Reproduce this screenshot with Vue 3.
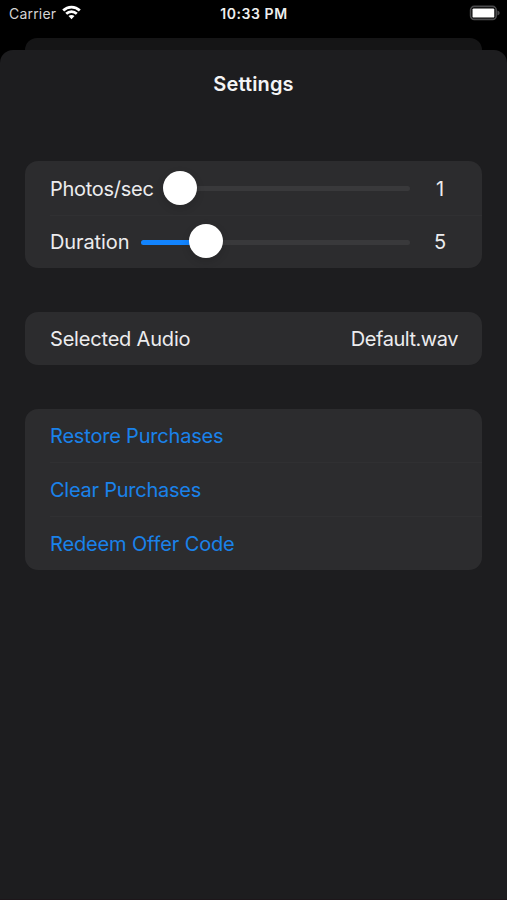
<script setup>
import { ref } from 'vue'

const sliders = ref([
  { id: 'photos', label: 'Photos/sec', value: 1, progress: 0 },
  { id: 'duration', label: 'Duration', value: 5, progress: 0.206 }
])
const actions = [
  { id: 'restore', label: 'Restore Purchases' },
  { id: 'clear', label: 'Clear Purchases' },
  { id: 'redeem', label: 'Redeem Offer Code' }
]
const thumbSize = 34
</script>

<template>
  <div class="screen">
    <header class="status">
      <div class="carrier">
        <span>Carrier</span>
        <svg class="wifi" width="19" height="15" viewBox="0 0 19 15">
          <g fill="none" stroke="#fff" stroke-width="2.7">
            <path d="M1.2 5.5C5.8 .9 13.2 .9 17.8 5.5" />
            <path d="M4.2 8.8C7.2 5.9 11.8 5.9 14.8 8.8" />
          </g>
          <path d="M6.5 11.1C8.2 9.6 10.8 9.6 12.5 11.1L9.5 14.2Z" fill="#fff" />
        </svg>
      </div>
      <span class="time">10:33 PM</span>
      <svg class="battery" width="32" height="16" viewBox="0 0 32 16">
        <rect x="1.6" y="1.4" width="25.6" height="13" rx="3.6" fill="none" stroke="#4b4b4d" stroke-width="1.6" />
        <rect x="3.5" y="3.4" width="21.8" height="9.2" rx="1.2" fill="#fff" />
        <path d="M28.4 5.4C31.4 6.5 31.4 9.3 28.4 10.4Z" fill="#4b4b4d" />
      </svg>
    </header>
    <div class="behind"></div>
    <main class="sheet">
      <h1 class="title">Settings</h1>

      <section class="card">
        <div v-for="s in sliders" :key="s.id" class="row" :class="s.id">
          <span class="label">{{ s.label }}</span>
          <div class="slider">
            <div class="track"></div>
            <div class="fill" :style="{ width: s.progress * 100 + '%' }"></div>
            <div class="thumb" :style="{ left: `calc((100% - ${thumbSize}px) * ${s.progress})` }"></div>
          </div>
          <span class="value">{{ s.value }}</span>
        </div>
      </section>

      <section class="card">
        <div class="row audio">
          <span class="label">Selected Audio</span>
          <span class="file">Default.wav</span>
        </div>
      </section>

      <section class="card links">
        <div v-for="a in actions" :key="a.id" class="row" :class="a.id">
          <a class="label">{{ a.label }}</a>
        </div>
      </section>
    </main>
  </div>
</template>

<style>
body {
  margin: 0;
  background: #000;
}
</style>

<style scoped>
.screen {
  width: 507px;
  height: 900px;
  display: flex;
  flex-direction: column;
  overflow: hidden;
  background: #000;
  color: #ececee;
  font-family: Inter, "Liberation Sans", sans-serif;
}
.status {
  height: 38px;
  flex: none;
  box-sizing: border-box;
  padding: 4px 6px 0 9px;
  display: grid;
  grid-template-columns: 1fr auto 1fr;
  align-items: start;
  font-size: 14px;
  line-height: 20px;
}
.carrier {
  display: flex;
  gap: 5.5px;
  color: #d4d4d4;
  letter-spacing: 0.2px;
}
.wifi {
  margin-top: 1px;
}
.time {
  margin-right: 2px;
  font-weight: 600;
  letter-spacing: 0.55px;
  color: #eee;
}
.battery {
  justify-self: end;
  margin-top: 1px;
}
.behind {
  flex: none;
  height: 12px;
  margin: 0 25px;
  border-radius: 12px 12px 0 0;
  background: #151516;
}
.sheet {
  flex: 1;
  padding: 0 25px;
  border-radius: 13px 13px 0 0;
  background: #1d1d1f;
  border-bottom: 1px solid #1d161a;
}
.title {
  height: 14px;
  margin: 0 0 77px;
  padding-top: 20px;
  font-size: 20px;
  line-height: 28px;
  font-weight: 600;
  letter-spacing: 0.15px;
  text-align: center;
  color: #f4f4f5;
}
.card {
  margin-bottom: 43.5px;
  border-radius: 13px;
  background: #2c2c2e;
}
.row {
  position: relative;
  height: 53.6px;
  padding: 0 24px 0 25px;
  display: flex;
  align-items: center;
  font-size: 20px;
}
.row + .row::before {
  content: "";
  position: absolute;
  top: 0;
  left: 25px;
  right: 0;
  height: 1px;
  background: #303032;
}
.label,
.file {
  padding-top: 2px;
  white-space: nowrap;
  letter-spacing: -0.19px;
}
.photos .label {
  letter-spacing: -0.27px;
}
.duration .label {
  letter-spacing: -0.1px;
}
.slider {
  position: relative;
  flex: 1;
  height: 34px;
  margin-left: 9px;
}
.duration .slider {
  margin-left: 11.5px;
}
.track,
.fill {
  position: absolute;
  top: 15.5px;
  left: 0;
  height: 5px;
  border-radius: 3px;
}
.track {
  width: 100%;
  background: #39393b;
}
.fill {
  background: #1284fe;
}
.thumb {
  position: absolute;
  top: 0;
  width: 34px;
  height: 34px;
  border-radius: 50%;
  background: #fff;
  box-shadow: 0 3px 8px rgba(0, 0, 0, 0.14);
}
.value {
  width: 36px;
  margin-left: 12px;
  padding-top: 2px;
  text-align: center;
}
.file {
  margin-left: auto;
  letter-spacing: -0.46px;
}
.links .label {
  color: #1a82ea;
}
.restore .label {
  padding-top: 0.5px;
}
.clear .label {
  letter-spacing: -0.25px;
}
.redeem .label {
  letter-spacing: -0.14px;
}
</style>
